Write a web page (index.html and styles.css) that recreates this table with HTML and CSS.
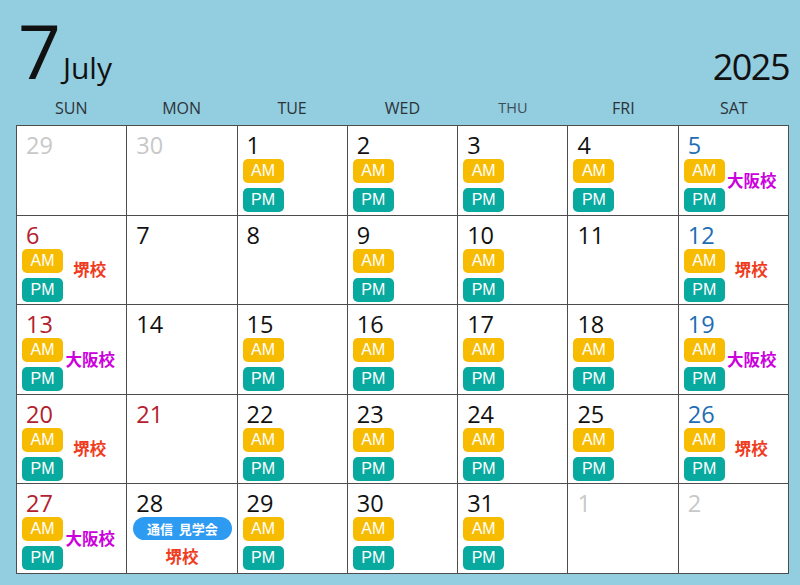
FILE: index.html
```html
<!DOCTYPE html>
<html lang="ja">
<head>
    <meta charset="UTF-8">
    <meta name="viewport" content="width=device-width, initial-scale=1.0">
    <title>July 2025</title>
    <link rel="stylesheet" href="styles.css">
</head>
<body>
    <div class="top">
        <div class="month">
            <span class="month-num">7</span>
            <span class="month-name">July</span>
        </div>
        <div class="year">2025</div>
    </div>

    <div class="weekdays">
        <div>SUN</div>
        <div>MON</div>
        <div>TUE</div>
        <div>WED</div>
        <div class="thu">THU</div>
        <div>FRI</div>
        <div>SAT</div>
    </div>

    <div class="calendar">
        <!-- week 1 -->
        <div class="cell"><div class="day other">29</div></div>
        <div class="cell"><div class="day other">30</div></div>
        <div class="cell">
            <div class="day">1</div>
            <div class="body"><div class="slots"><span class="am">AM</span><span class="pm">PM</span></div></div>
        </div>
        <div class="cell">
            <div class="day">2</div>
            <div class="body"><div class="slots"><span class="am">AM</span><span class="pm">PM</span></div></div>
        </div>
        <div class="cell">
            <div class="day">3</div>
            <div class="body"><div class="slots"><span class="am">AM</span><span class="pm">PM</span></div></div>
        </div>
        <div class="cell">
            <div class="day">4</div>
            <div class="body"><div class="slots"><span class="am">AM</span><span class="pm">PM</span></div></div>
        </div>
        <div class="cell">
            <div class="day sat">5</div>
            <div class="body"><div class="slots"><span class="am">AM</span><span class="pm">PM</span></div><div class="label osaka">大阪校</div></div>
        </div>

        <!-- week 2 -->
        <div class="cell">
            <div class="day sun">6</div>
            <div class="body"><div class="slots"><span class="am">AM</span><span class="pm">PM</span></div><div class="label sakai">堺校</div></div>
        </div>
        <div class="cell"><div class="day">7</div></div>
        <div class="cell"><div class="day">8</div></div>
        <div class="cell">
            <div class="day">9</div>
            <div class="body"><div class="slots"><span class="am">AM</span><span class="pm">PM</span></div></div>
        </div>
        <div class="cell">
            <div class="day">10</div>
            <div class="body"><div class="slots"><span class="am">AM</span><span class="pm">PM</span></div></div>
        </div>
        <div class="cell"><div class="day">11</div></div>
        <div class="cell">
            <div class="day sat">12</div>
            <div class="body"><div class="slots"><span class="am">AM</span><span class="pm">PM</span></div><div class="label sakai">堺校</div></div>
        </div>

        <!-- week 3 -->
        <div class="cell">
            <div class="day sun">13</div>
            <div class="body"><div class="slots"><span class="am">AM</span><span class="pm">PM</span></div><div class="label osaka">大阪校</div></div>
        </div>
        <div class="cell"><div class="day">14</div></div>
        <div class="cell">
            <div class="day">15</div>
            <div class="body"><div class="slots"><span class="am">AM</span><span class="pm">PM</span></div></div>
        </div>
        <div class="cell">
            <div class="day">16</div>
            <div class="body"><div class="slots"><span class="am">AM</span><span class="pm">PM</span></div></div>
        </div>
        <div class="cell">
            <div class="day">17</div>
            <div class="body"><div class="slots"><span class="am">AM</span><span class="pm">PM</span></div></div>
        </div>
        <div class="cell">
            <div class="day">18</div>
            <div class="body"><div class="slots"><span class="am">AM</span><span class="pm">PM</span></div></div>
        </div>
        <div class="cell">
            <div class="day sat">19</div>
            <div class="body"><div class="slots"><span class="am">AM</span><span class="pm">PM</span></div><div class="label osaka">大阪校</div></div>
        </div>

        <!-- week 4 -->
        <div class="cell">
            <div class="day sun">20</div>
            <div class="body"><div class="slots"><span class="am">AM</span><span class="pm">PM</span></div><div class="label sakai">堺校</div></div>
        </div>
        <div class="cell"><div class="day sun">21</div></div>
        <div class="cell">
            <div class="day">22</div>
            <div class="body"><div class="slots"><span class="am">AM</span><span class="pm">PM</span></div></div>
        </div>
        <div class="cell">
            <div class="day">23</div>
            <div class="body"><div class="slots"><span class="am">AM</span><span class="pm">PM</span></div></div>
        </div>
        <div class="cell">
            <div class="day">24</div>
            <div class="body"><div class="slots"><span class="am">AM</span><span class="pm">PM</span></div></div>
        </div>
        <div class="cell">
            <div class="day">25</div>
            <div class="body"><div class="slots"><span class="am">AM</span><span class="pm">PM</span></div></div>
        </div>
        <div class="cell">
            <div class="day sat">26</div>
            <div class="body"><div class="slots"><span class="am">AM</span><span class="pm">PM</span></div><div class="label sakai">堺校</div></div>
        </div>

        <!-- week 5 -->
        <div class="cell">
            <div class="day sun">27</div>
            <div class="body"><div class="slots"><span class="am">AM</span><span class="pm">PM</span></div><div class="label osaka">大阪校</div></div>
        </div>
        <div class="cell">
            <div class="day">28</div>
            <div class="event">通信&nbsp;&nbsp;見学会</div>
            <div class="label sakai center">堺校</div>
        </div>
        <div class="cell">
            <div class="day">29</div>
            <div class="body"><div class="slots"><span class="am">AM</span><span class="pm">PM</span></div></div>
        </div>
        <div class="cell">
            <div class="day">30</div>
            <div class="body"><div class="slots"><span class="am">AM</span><span class="pm">PM</span></div></div>
        </div>
        <div class="cell">
            <div class="day">31</div>
            <div class="body"><div class="slots"><span class="am">AM</span><span class="pm">PM</span></div></div>
        </div>
        <div class="cell"><div class="day other">1</div></div>
        <div class="cell"><div class="day other">2</div></div>
    </div>
</body>
</html>
```

FILE: styles.css
```css
body {
    margin: 0;
    background-color: #93cde0;
    font-family: "Open Sans", "Noto Sans", sans-serif;
    color: #111;
}
.top {
    display: flex;
    justify-content: space-between;
    align-items: baseline;
    padding: 5px 11px 3px 18px;
    height: 90px;
}
.month {
    display: flex;
    align-items: baseline;
}
.month-num {
    font-size: 75px;
    line-height: 90px;
}
.month-name {
    font-size: 30px;
    line-height: 30px;
    margin-left: 2px;
}
.year {
    font-size: 36px;
    line-height: 36px;
    letter-spacing: -1.5px;
    position: relative;
    top: 1px;
}
.weekdays {
    display: grid;
    grid-template-columns: repeat(7, 1fr);
    width: 773px;
    margin: 0 0 7px 16px;
    font-size: 16px;
    line-height: 20px;
    text-align: center;
    color: #2c3338;
}
.weekdays .thu {
    font-size: 14.5px;
    color: #3f4c55;
}
.calendar {
    display: grid;
    grid-template-columns: repeat(7, 1fr);
    grid-template-rows: repeat(5, 1fr);
    gap: 1px;
    padding: 1px;
    width: 771px;
    height: 447px;
    margin-left: 16px;
    background-color: #4d4d4d;
}
.cell {
    background-color: #fff;
    padding: 8px 5px 0 5px;
    display: flex;
    flex-direction: column;
}
.day {
    font-size: 23.5px;
    line-height: 23px;
    padding-left: 4px;
    margin-bottom: 2px;
    color: #111;
}
.day.other {
    color: #c8c8c8;
}
.day.sun {
    color: #b4202e;
}
.day.sat {
    color: #1e6db5;
}
.body {
    display: flex;
    align-items: center;
}
.slots {
    display: flex;
    flex-direction: column;
    gap: 5px;
}
.am, .pm {
    display: block;
    width: 41px;
    height: 24px;
    line-height: 24px;
    border-radius: 5px;
    text-align: center;
    color: #fff;
    font-family: "Liberation Sans", Arial, sans-serif;
    font-size: 16px;
}
.am {
    background-color: #f7bb00;
}
.pm {
    background-color: #08a99e;
}
.label {
    flex: 1;
    text-align: center;
    font-family: "Noto Sans CJK JP", sans-serif;
    font-weight: bold;
    font-size: 16.5px;
    line-height: 20px;
    padding: 0 5px 12px 0;
    white-space: nowrap;
}
.label.osaka {
    color: #cc00dd;
    padding-right: 4px;
}
.label.sakai {
    color: #f03c1e;
}
.label.center {
    flex: none;
    padding: 6px 0 0 0;
}
.event {
    margin: 0 0 0 1px;
    height: 23px;
    line-height: 23px;
    border-radius: 12px;
    background-color: #2e9bf2;
    color: #fff;
    text-align: center;
    font-family: "Noto Sans CJK JP", sans-serif;
    font-weight: bold;
    font-size: 13px;
}
```
